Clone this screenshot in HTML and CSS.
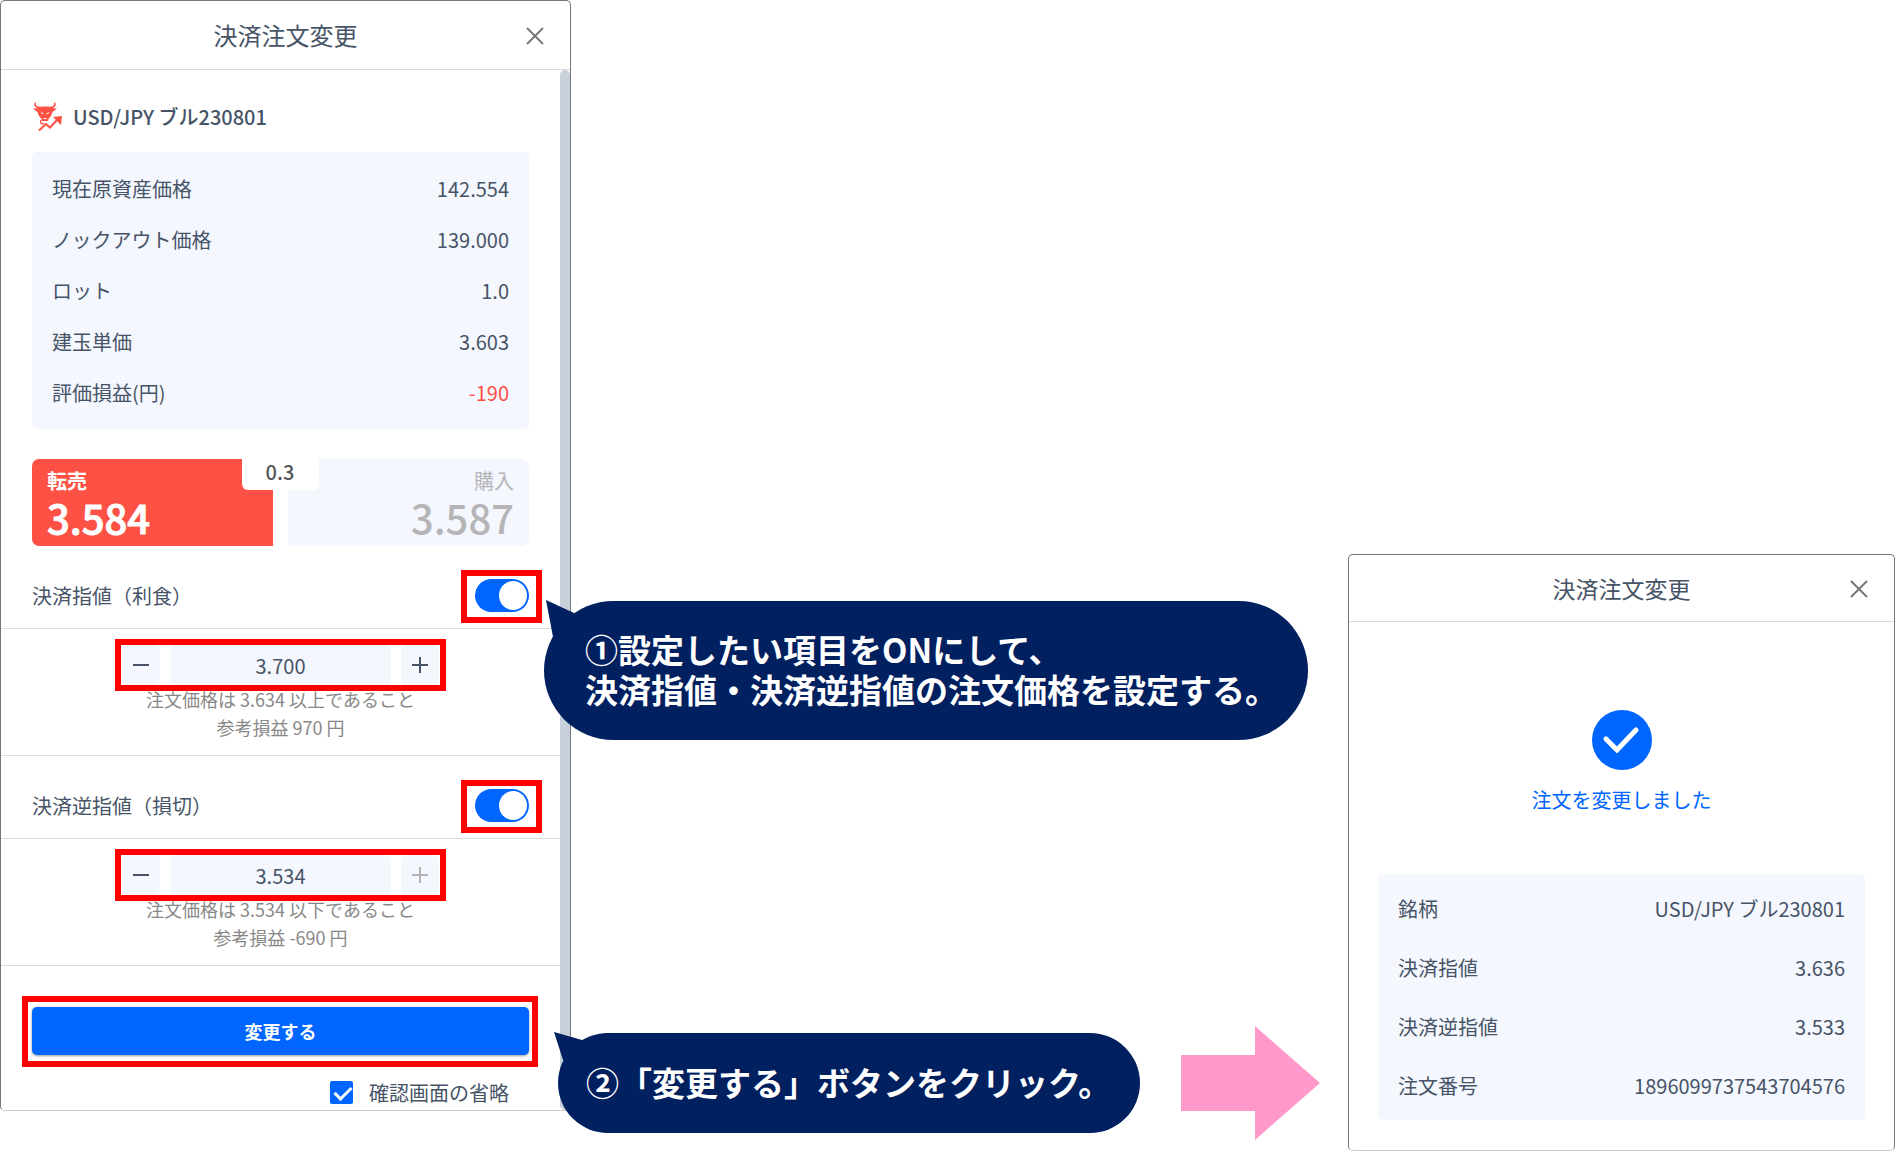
FILE: index.html
```html
<!DOCTYPE html>
<html lang="ja">
<head>
    <meta charset="UTF-8">
    <meta name="viewport" content="width=device-width, initial-scale=1.0">
    <title>決済注文変更</title>
    <link rel="stylesheet" href="styles.css">
</head>
<body>

<main class="guide">

    <!-- 注文変更画面 -->
    <section class="panel">
        <header class="panel-header">
            <h1>決済注文変更</h1>
            <button type="button" class="close" aria-label="閉じる">
                <svg viewBox="0 0 18 18" width="18" height="18"><path d="M1 1L17 17M17 1L1 17"/></svg>
            </button>
        </header>

        <div class="panel-body">
            <form class="order-form">
                <h2 class="asset">
                    <svg class="bull" viewBox="0 0 30 30" width="30" height="30">
                        <path class="horn" d="M8 5.500C4 5.500 2 3.500 3.500 0.500M18 5.500C22 5.500 24 3.500 22.500 0.500"/>
                        <path class="fill" d="M1 6.500L7 6L9 4.500H17L19 6L25 6.500L20.500 10L19 14L16.500 17L16 19H10L9.500 17L7 14L5.500 10Z"/>
                        <path class="eye" d="M9 10.500L11.500 12M17 10.500L14.500 12M11.500 16.500H14.500"/>
                        <path class="horn" d="M9 18C7.500 21 9.500 22.500 12 21.500"/>
                        <path class="trend" d="M7 28.500L14 22L18 25.500L25 18"/>
                        <path class="fill" d="M21 15L30 14L29 23Z"/>
                    </svg>
                    USD/JPY ブル230801
                </h2>

                <div class="info">
                    <table>
                        <tr><th scope="row">現在原資産価格</th><td>142.554</td></tr>
                        <tr><th scope="row">ノックアウト価格</th><td>139.000</td></tr>
                        <tr><th scope="row">ロット</th><td>1.0</td></tr>
                        <tr><th scope="row">建玉単価</th><td>3.603</td></tr>
                        <tr><th scope="row">評価損益(円)</th><td class="minus">-190</td></tr>
                    </table>
                </div>

                <div class="prices">
                    <button type="button" class="price sell"><span>転売</span><strong>3.584</strong></button>
                    <button type="button" class="price buy" disabled><span>購入</span><strong>3.587</strong></button>
                    <div class="spread">0.3</div>
                </div>

                <!-- 決済指値 -->
                <div class="setting-head">
                    <label for="limitOn">決済指値（利食）</label>
                    <span class="mark mark-switch"><input type="checkbox" class="switch" id="limitOn" checked></span>
                    <div class="balloon balloon-setting">
                        <svg class="tail" viewBox="0 0 36 42" width="36" height="42"><path d="M2 0L30 13L34 40L9 37Z"/></svg>
                        <p>①設定したい項目をONにして、<br>決済指値・決済逆指値の注文価格を設定する。</p>
                    </div>
                </div>
                <div class="setting-body">
                    <div class="mark stepper">
                        <button type="button" aria-label="減らす"><svg viewBox="0 0 16 16" width="16" height="16"><path d="M0 8H16"/></svg></button>
                        <input type="text" value="3.700" aria-label="決済指値の注文価格">
                        <button type="button" aria-label="増やす"><svg viewBox="0 0 16 16" width="16" height="16"><path d="M0 8H16M8 0V16"/></svg></button>
                    </div>
                    <p>注文価格は 3.634 以上であること<br>参考損益 970 円</p>
                </div>

                <!-- 決済逆指値 -->
                <div class="setting-head">
                    <label for="stopOn">決済逆指値（損切）</label>
                    <span class="mark mark-switch"><input type="checkbox" class="switch" id="stopOn" checked></span>
                </div>
                <div class="setting-body">
                    <div class="mark stepper">
                        <button type="button" aria-label="減らす"><svg viewBox="0 0 16 16" width="16" height="16"><path d="M0 8H16"/></svg></button>
                        <input type="text" value="3.534" aria-label="決済逆指値の注文価格">
                        <button type="button" aria-label="増やす" disabled><svg viewBox="0 0 16 16" width="16" height="16"><path d="M0 8H16M8 0V16"/></svg></button>
                    </div>
                    <p>注文価格は 3.534 以下であること<br>参考損益 -690 円</p>
                </div>

                <div class="actions">
                    <div class="mark mark-submit">
                        <button type="button" class="submit">変更する</button>
                        <div class="balloon balloon-submit">
                            <svg class="tail" viewBox="0 0 36 42" width="36" height="42"><path d="M0 0L28 8L34 36L9 28Z"/></svg>
                            <p>②「変更する」ボタンをクリック。</p>
                        </div>
                    </div>
                    <div class="skip">
                        <input type="checkbox" id="skip" checked>
                        <label for="skip">確認画面の省略</label>
                    </div>
                </div>
            </form>
            <div class="scrollbar"></div>
        </div>
    </section>

    <div class="next">
        <svg viewBox="0 0 139 114" width="139" height="114"><path d="M0 29H74V0L139 57L74 114V85H0Z"/></svg>
    </div>

    <!-- 変更完了画面 -->
    <section class="panel panel-done">
        <header class="panel-header">
            <h1>決済注文変更</h1>
            <button type="button" class="close" aria-label="閉じる">
                <svg viewBox="0 0 18 18" width="18" height="18"><path d="M1 1L17 17M17 1L1 17"/></svg>
            </button>
        </header>
        <div class="done">
            <svg viewBox="0 0 60 60" width="60" height="60"><circle cx="30" cy="30" r="30"/><path d="M14 29L25 40L44 20"/></svg>
            <p>注文を変更しました</p>
        </div>
        <div class="info">
            <table>
                <tr><th scope="row">銘柄</th><td>USD/JPY ブル230801</td></tr>
                <tr><th scope="row">決済指値</th><td>3.636</td></tr>
                <tr><th scope="row">決済逆指値</th><td>3.533</td></tr>
                <tr><th scope="row">注文番号</th><td>1896099737543704576</td></tr>
            </table>
        </div>
    </section>

</main>

</body>
</html>
```
FILE: styles.css
```css
* {
    box-sizing: border-box;
}
body {
    margin: 0;
    background: #fff;
    color: #475467;
    font-family: 'Noto Sans CJK JP', sans-serif;
    font-size: 20px;
}
h1, h2, p {
    margin: 0;
}
h1 {
    font-weight: normal;
}
button, input {
    margin: 0;
    padding: 0;
    border: none;
    font-family: inherit;
    font-size: inherit;
    color: inherit;
}
button {
    cursor: pointer;
}
svg {
    display: block;
}
.guide {
    display: grid;
    grid-template-columns: minmax(480px, 571fr) 777fr minmax(460px, 547fr);
    min-height: 100vh;
}

/* パネル */
.panel {
    align-self: start;
    border: 1px solid #777;
    border-bottom-color: #ccc;
    border-radius: 5px;
}
.panel-header {
    display: flex;
    align-items: center;
    height: 69px;
    padding: 0 26px 0 80px;
    border-bottom: 1px solid #d9d9d9;
}
.panel-header h1 {
    flex: 1;
    font-size: 24px;
    line-height: 66px;
    text-align: center;
}
.close {
    display: flex;
    justify-content: flex-end;
    width: 54px;
    padding-top: 2px;
    background: none;
}
.close path {
    fill: none;
    stroke: #777;
    stroke-width: 2;
}
.panel-body {
    display: flex;
}
.order-form {
    flex: 1;
}
.scrollbar {
    width: 10px;
    background: #c8d0d9;
    border-radius: 5px;
}

/* 銘柄 */
.asset {
    display: flex;
    align-items: center;
    gap: 11px;
    padding: 27px 31px 15px;
    font-size: 20px;
    font-weight: 500;
    line-height: 40px;
}
.bull path {
    fill: none;
    stroke: #ff5044;
    stroke-width: 2;
}
.bull .fill {
    fill: #ff5044;
    stroke: none;
}
.bull .horn {
    stroke-width: 1.500;
}
.bull .eye {
    stroke: #fff;
    stroke-width: 1;
}
.info {
    margin: 0 31px;
    padding: 11px 20px;
    background: #f4f7fe;
    border-radius: 5px;
}
.info table {
    width: 100%;
    border-collapse: collapse;
}
.info th, .info td {
    height: 51px;
    padding: 0;
    font-weight: normal;
    text-align: left;
}
.info td {
    text-align: right;
}
.info .minus {
    color: #ff5044;
}

/* 価格ボタン */
.prices {
    position: relative;
    display: grid;
    grid-template-columns: 1fr 1fr;
    gap: 15px;
    margin: 30px 31px 0;
}
.price {
    display: flex;
    flex-direction: column;
    height: 87px;
    padding: 7px 15px 0;
}
.price span {
    line-height: 30px;
}
.price strong {
    font-size: 40px;
    font-weight: 500;
    line-height: 42px;
}
.sell {
    align-items: flex-start;
    background: #fc5144;
    color: #fff;
    border-radius: 7px 0 0 7px;
    font-weight: bold;
}
.sell strong {
    -webkit-text-stroke: 1px;
}
.buy {
    align-items: flex-end;
    background: #f4f7fe;
    color: #b5b5b7;
    border-radius: 0 7px 7px 0;
}
.spread {
    position: absolute;
    top: 0;
    left: 50%;
    width: 77px;
    height: 31px;
    margin-left: -39px;
    background: #fff;
    color: #555;
    border-radius: 0 0 6px 6px;
    font-weight: 500;
    line-height: 26px;
    text-align: center;
}

/* 注文設定 */
.setting-head {
    position: relative;
    display: flex;
    justify-content: space-between;
    align-items: center;
    height: 83px;
    padding: 16px 31px 0;
    border-bottom: 1px solid #ddd;
}
.setting-body {
    display: flex;
    flex-direction: column;
    align-items: center;
    padding: 16px 31px 14px;
    border-bottom: 1px solid #ddd;
}
.setting-body p {
    color: #888;
    font-size: 18px;
    line-height: 28px;
    text-align: center;
}
.switch {
    display: block;
    appearance: none;
    width: 54px;
    height: 33px;
    background: #0066ff;
    border-radius: 17px;
}
.switch::before {
    content: "";
    display: block;
    width: 28px;
    height: 29px;
    margin: 2px 2px 2px 24px;
    background: #fff;
    border-radius: 50%;
}
.stepper {
    display: flex;
    gap: 10px;
}
.stepper button, .stepper input {
    width: 38px;
    height: 40px;
    background: #f4f7fe;
    border-radius: 5px;
}
.stepper button {
    display: flex;
    justify-content: center;
    align-items: center;
}
.stepper input {
    width: 221px;
    text-align: center;
}
.stepper path {
    fill: none;
    stroke: #475467;
    stroke-width: 2;
}
.stepper button:disabled path {
    stroke: #b5b5b7;
}

/* 赤枠 */
.mark {
    position: relative;
}
.mark::after {
    content: "";
    position: absolute;
    inset: -6px -7px;
    border: 6px solid #f00;
    pointer-events: none;
}
.mark-switch::after {
    inset: -9px -13px -11px -14px;
}
.mark-submit::after {
    inset: -11px -9px -12px -10px;
}

.actions {
    padding: 41px 31px 0;
}
.submit {
    display: block;
    width: 100%;
    height: 48px;
    background: #0066ff;
    color: #fff;
    border-radius: 5px;
    box-shadow: 0 1px 3px rgba(0, 0, 0, 0.4);
    font-size: 18px;
    font-weight: bold;
}
.skip {
    display: flex;
    justify-content: flex-end;
    align-items: center;
    gap: 16px;
    height: 36px;
    margin-top: 19px;
    padding-right: 20px;
}
.skip input {
    appearance: none;
    width: 23px;
    height: 23px;
    background: #0066ff;
    border-radius: 2px;
}
.skip input::before {
    content: "";
    display: block;
    width: 7px;
    height: 14px;
    margin: 2px 8px;
    border: solid #fff;
    border-width: 0 3px 3px 0;
    transform: rotate(45deg);
}

/* 吹き出し */
.balloon {
    position: absolute;
    z-index: 2;
    background: #002060;
    color: #fff;
    font-size: 33px;
    font-weight: bold;
    line-height: 40px;
    white-space: nowrap;
}
.balloon-setting {
    top: 55px;
    left: calc(100% - 16px);
    width: 764px;
    padding: 28px 0 31px 41px;
    border-radius: 70px;
}
.balloon-submit {
    top: 26px;
    left: calc(100% + 29px);
    width: 582px;
    padding: 29px 0 31px 28px;
    border-radius: 50px;
}
.tail {
    position: absolute;
    top: -1px;
    left: 0;
    fill: #002060;
}
.balloon-submit .tail {
    left: -4px;
}

/* 矢印 */
.next {
    display: flex;
    justify-content: flex-end;
    align-items: flex-end;
    padding: 0 28px 11px 0;
}
.next svg {
    fill: #ff99cc;
}

/* 完了画面 */
.panel-done {
    align-self: end;
    padding-bottom: 30px;
}
.panel-done .panel-header {
    height: 67px;
}
.panel-done .panel-header h1 {
    font-size: 23px;
    line-height: 64px;
}
.panel-done .info {
    margin: 0 29px;
    padding: 5px 20px;
}
.panel-done th, .panel-done td {
    height: 59px;
}
.done {
    display: flex;
    flex-direction: column;
    align-items: center;
    padding: 88px 0 59px;
    color: #0066ff;
}
.done p {
    margin-top: 15px;
    line-height: 30px;
}
.done circle {
    fill: #0066ff;
}
.done path {
    fill: none;
    stroke: #fff;
    stroke-width: 5;
    stroke-linecap: round;
}
```
